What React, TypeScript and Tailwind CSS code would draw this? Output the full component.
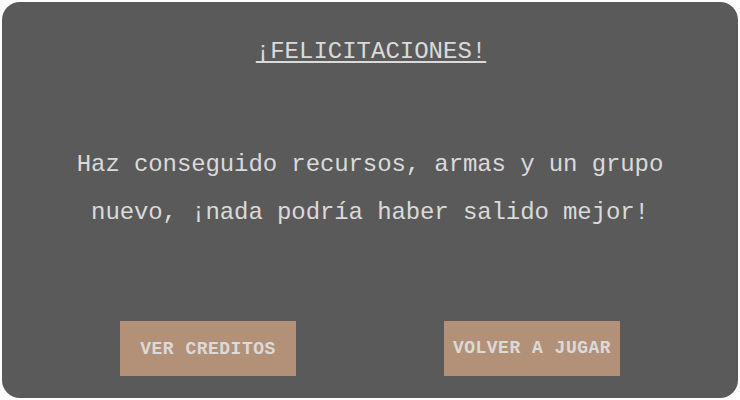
export default function App() {
  return (
    <div className="w-[740px] h-[400px] bg-white p-[2px]">
      <div
        className="w-[736px] h-[396px] rounded-[18px] bg-[#5a5a5a] flex flex-col items-center text-[#dadada]"
        style={{ fontFamily: '"Liberation Mono", "DejaVu Sans Mono", monospace' }}
      >
        <div className="mt-[38px] mr-[4px] text-[24px] leading-[24px] underline decoration-2 underline-offset-[3px] pl-[6px]">
          ¡FELICITACIONES!
        </div>
        <div className="mt-[77px] text-[24px] leading-[48px] text-center w-[640px] tracking-[-0.1px]">
          <div>Haz conseguido recursos, armas y un grupo</div>
          <div>nuevo, ¡nada podría haber salido mejor!</div>
        </div>
        <div className="mt-[84px] flex gap-[148px]">
          <button className="w-[176px] h-[55px] bg-[#b39178] flex items-center justify-center text-[18px] leading-[18px] font-bold tracking-[0.5px] text-[#dadada]">
            VER CREDITOS
          </button>
          <button className="w-[176px] h-[55px] bg-[#b39178] flex items-center justify-center text-[18px] leading-[18px] font-bold tracking-[0.5px] text-[#dadada] pb-[2px]">
            VOLVER A JUGAR
          </button>
        </div>
      </div>
    </div>
  );
}
